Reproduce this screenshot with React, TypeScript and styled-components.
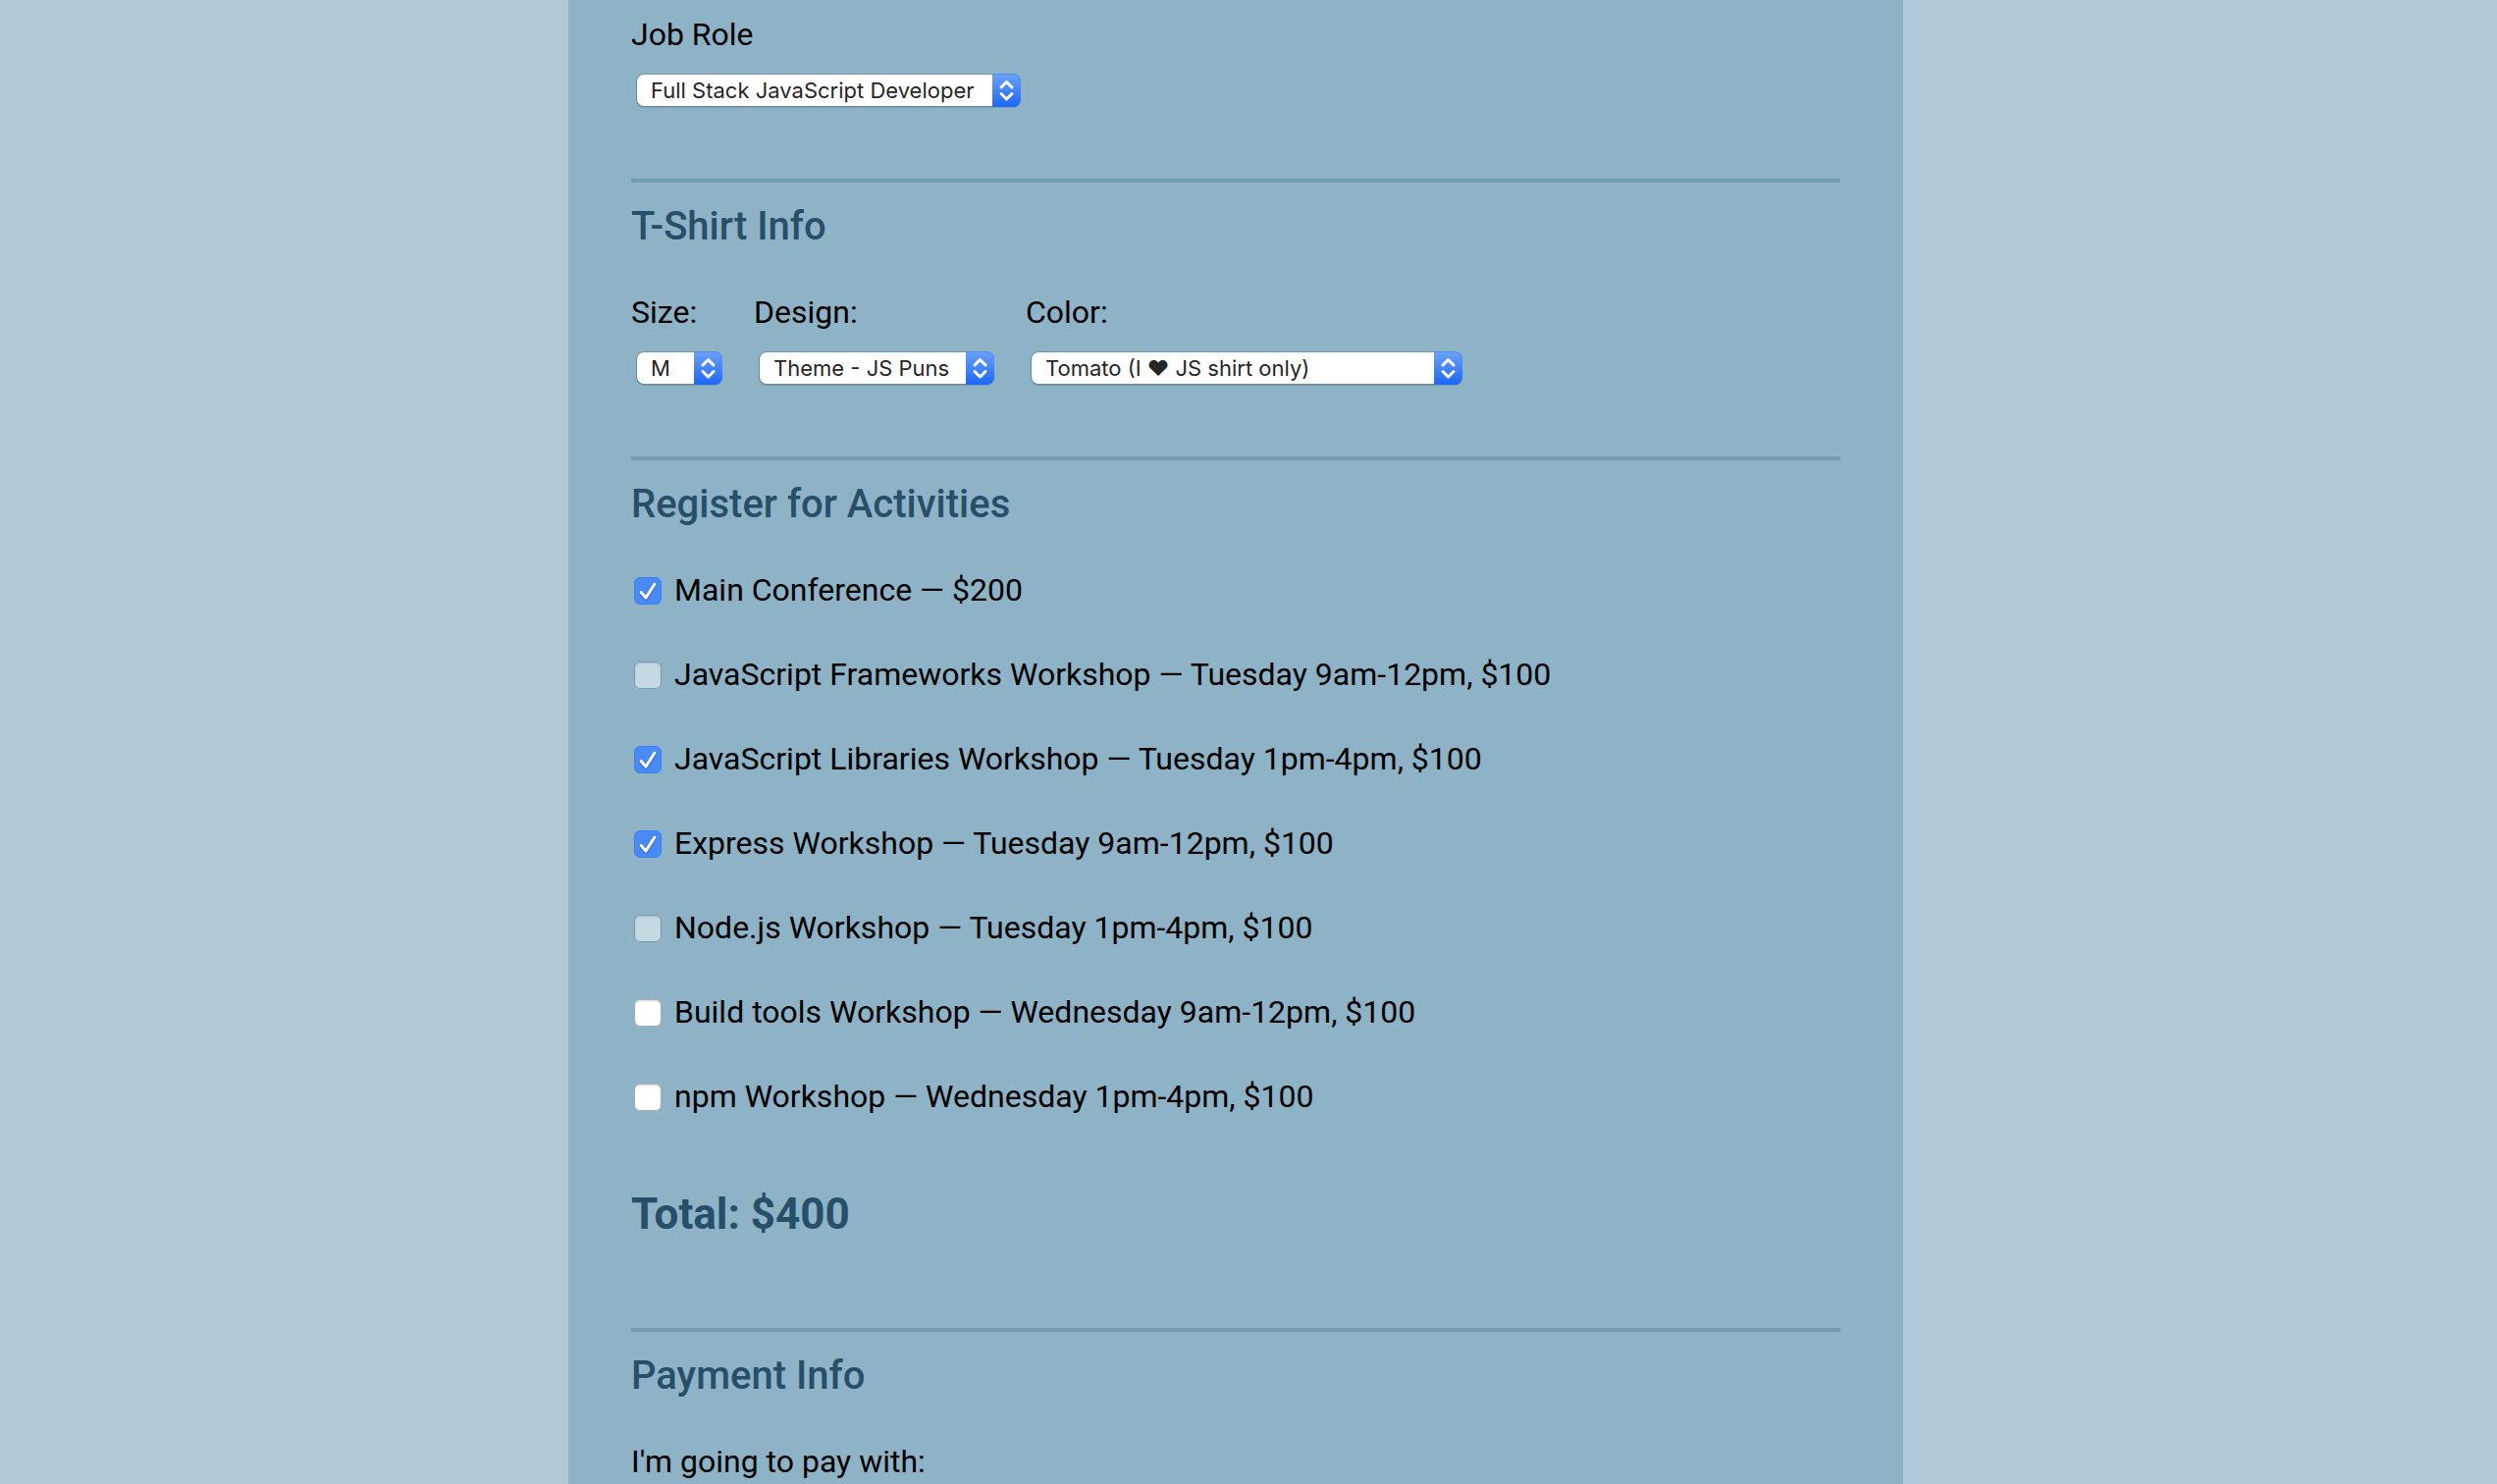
import React, { useState } from "react";
import styled, { createGlobalStyle } from "styled-components";

const GlobalStyle = createGlobalStyle`
  *, *::before, *::after { box-sizing: border-box; }
  body {
    margin: 0;
    background: #b2c9d7;
    color: #000;
    font-family: Roboto, sans-serif;
    font-size: 32px;
    line-height: 40px;
  }
`;

const Page = styled.main`
  display: flex;
  justify-content: center;
  min-height: 100vh;
  padding-right: 26px;
`;

const Form = styled.form`
  width: 100%;
  max-width: 1360px;
  padding: 15px 64px 0;
  background: #8eb3c7;
`;

const Group = styled.section<{ $end?: number }>`
  padding-bottom: ${(p) => p.$end ?? 73}px;

  & + & {
    border-top: 4px solid #739bb3;
    padding-top: 20px;
  }
`;

const Heading = styled.h2`
  margin: 0 0 42px;
  color: #264f69;
  font-size: 40px;
  font-weight: 500;
  line-height: 50px;
`;

const FieldRow = styled.div`
  display: flex;
  flex-wrap: wrap;
  gap: 26px;
`;

const Field = styled.div`
  display: flex;
  flex-direction: column;
  align-items: flex-start;
  gap: 20px;
`;

const SelectBox = styled.div<{ $width: number }>`
  position: relative;
  width: ${(p) => p.$width}px;
  margin: 0 6px 0 5px;
`;

const NativeSelect = styled.select`
  display: block;
  appearance: none;
  width: 100%;
  height: 34px;
  margin: 0;
  padding: 0 30px 0 14px;
  border: 1px solid rgba(60, 90, 115, 0.3);
  border-radius: 8px;
  background: #fff padding-box;
  box-shadow: 0 1px 1px rgba(0, 0, 0, 0.12);
  color: #262626;
  font-family: Inter, "DejaVu Sans", sans-serif;
  font-size: 22px;
  line-height: 32px;
`;

const Stepper = styled.svg`
  position: absolute;
  top: 0;
  right: 0;
  width: 29px;
  height: 34px;
  border-radius: 0 8px 8px 0;
  background: linear-gradient(#6ea2f8, #1b67f8);
  box-shadow: inset 0 1px 0 rgba(60, 130, 250, 0.6);
  pointer-events: none;
`;

const ActivityList = styled.div`
  display: flex;
  flex-direction: column;
  gap: 46px;
`;

const Activity = styled.label`
  display: flex;
  align-items: center;
  gap: 13px;
  padding-left: 3px;
`;

const CheckBox = styled.span`
  position: relative;
  flex: none;
  width: 28px;
  padding-top: 2px;
`;

const CheckInput = styled.input`
  display: block;
  appearance: none;
  width: 28px;
  height: 28px;
  margin: 0;
  border: 1px solid #a9adb0;
  border-radius: 6px;
  background: #fff;
  box-shadow: inset 0 1px 2px rgba(0, 0, 0, 0.16);

  &:checked {
    border-color: #3d80f3;
    background: #4a8af5;
    box-shadow: none;
  }

  &:disabled {
    border-color: #7c9eb1;
    background: #c6d8e2;
    box-shadow: inset 0 1px 2px rgba(80, 110, 130, 0.25);
  }
`;

const Tick = styled.svg`
  position: absolute;
  left: 0;
  bottom: 0;
  width: 28px;
  height: 28px;
  pointer-events: none;
  filter: drop-shadow(0 1px 1px rgba(0, 40, 120, 0.4));
`;

const Total = styled.h3`
  margin: 74px 0 0;
  color: #264f69;
  font-size: 44px;
  font-weight: 700;
  line-height: 52px;
`;

interface SelectFieldProps {
  id: string;
  label: string;
  width: number;
  options: string[];
}

function SelectField({ id, label, width, options }: SelectFieldProps) {
  return (
    <Field>
      <label htmlFor={id}>{label}</label>
      <SelectBox $width={width}>
        <NativeSelect id={id}>
          {options.map((option) => (
            <option key={option}>{option}</option>
          ))}
        </NativeSelect>
        <Stepper viewBox="0 0 29 34" aria-hidden="true">
          <path
            d="M9 14 L14.5 8.5 L20 14 M9 20.5 L14.5 26 L20 20.5"
            fill="none"
            stroke="#fff"
            strokeWidth="3"
            strokeLinecap="round"
            strokeLinejoin="round"
          />
        </Stepper>
      </SelectBox>
    </Field>
  );
}

const activities = [
  { name: "Main Conference", when: "", slot: "main", cost: 200 },
  { name: "JavaScript Frameworks Workshop", when: "Tuesday 9am-12pm, ", slot: "tue-am", cost: 100 },
  { name: "JavaScript Libraries Workshop", when: "Tuesday 1pm-4pm, ", slot: "tue-pm", cost: 100 },
  { name: "Express Workshop", when: "Tuesday 9am-12pm, ", slot: "tue-am", cost: 100 },
  { name: "Node.js Workshop", when: "Tuesday 1pm-4pm, ", slot: "tue-pm", cost: 100 },
  { name: "Build tools Workshop", when: "Wednesday 9am-12pm, ", slot: "wed-am", cost: 100 },
  { name: "npm Workshop", when: "Wednesday 1pm-4pm, ", slot: "wed-pm", cost: 100 },
];

export default function App() {
  const [chosen, setChosen] = useState<number[]>([0, 2, 3]);

  const toggle = (index: number) =>
    setChosen((now) => (now.includes(index) ? now.filter((i) => i !== index) : [...now, index]));

  const isBlocked = (index: number) =>
    !chosen.includes(index) && chosen.some((i) => activities[i].slot === activities[index].slot);

  const total = chosen.reduce((sum, i) => sum + activities[i].cost, 0);

  return (
    <>
      <GlobalStyle />
      <Page>
        <Form>
          <Group>
            <SelectField id="role" label="Job Role" width={392} options={["Full Stack JavaScript Developer"]} />
          </Group>

          <Group>
            <Heading>T-Shirt Info</Heading>
            <FieldRow>
              <SelectField id="size" label="Size:" width={88} options={["M"]} />
              <SelectField id="design" label="Design:" width={240} options={["Theme - JS Puns"]} />
              <SelectField id="color" label="Color:" width={440} options={["Tomato (I ♥ JS shirt only)"]} />
            </FieldRow>
          </Group>

          <Group $end={90}>
            <Heading>Register for Activities</Heading>
            <ActivityList>
              {activities.map(({ name, when, cost }, index) => (
                <Activity key={name}>
                  <CheckBox>
                    <CheckInput
                      type="checkbox"
                      checked={chosen.includes(index)}
                      disabled={isBlocked(index)}
                      onChange={() => toggle(index)}
                    />
                    {chosen.includes(index) && (
                      <Tick viewBox="0 0 28 28" aria-hidden="true">
                        <path
                          d="M7.2 15.4 L12 21 L20.8 7.2"
                          fill="none"
                          stroke="#fff"
                          strokeWidth="3"
                          strokeLinecap="round"
                          strokeLinejoin="round"
                        />
                      </Tick>
                    )}
                  </CheckBox>
                  <span>{`${name} — ${when}$${cost}`}</span>
                </Activity>
              ))}
            </ActivityList>
            <Total>{`Total: $${total}`}</Total>
          </Group>

          <Group $end={0}>
            <Heading>Payment Info</Heading>
            <div>I'm going to pay with:</div>
          </Group>
        </Form>
      </Page>
    </>
  );
}
